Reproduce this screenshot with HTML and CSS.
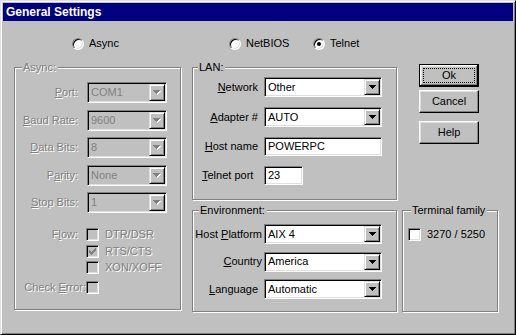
FILE: index.html
```html
<!DOCTYPE html>
<html>
<head>
<meta charset="utf-8">
<title>General Settings</title>
<link rel="stylesheet" href="styles.css">
</head>
<body>
<div class="win">
  <div class="titlebar">General Settings</div>
  <div class="client">
    <div class="modes">
      <div class="radio"><span class="rb"></span><span>Async</span></div>
      <div class="radio"><span class="rb"></span><span>NetBIOS</span></div>
      <div class="radio"><span class="rb on"></span><span>Telnet</span></div>
    </div>

    <div class="panes">
      <fieldset class="group async">
        <legend class="dim">Async:</legend>
        <div class="afields">
          <div class="field"><span class="lbl dim"><u>P</u>ort:</span><div class="combo off"><span class="val">COM1</span><span class="drop"><svg width="8" height="5" viewBox="0 0 8 5"><path class="ash" d="M1 1h7v1h-1v1h-1v1h-1v1h-1v-1h-1v-1h-1v-1h-1z"/><path class="afg" d="M0 0h7v1h-1v1h-1v1h-1v1h-1v-1h-1v-1h-1v-1h-1z"/></svg></span></div></div>
          <div class="field"><span class="lbl dim"><u>B</u>aud Rate:</span><div class="combo off"><span class="val">9600</span><span class="drop"><svg width="8" height="5" viewBox="0 0 8 5"><path class="ash" d="M1 1h7v1h-1v1h-1v1h-1v1h-1v-1h-1v-1h-1v-1h-1z"/><path class="afg" d="M0 0h7v1h-1v1h-1v1h-1v1h-1v-1h-1v-1h-1v-1h-1z"/></svg></span></div></div>
          <div class="field"><span class="lbl dim"><u>D</u>ata Bits:</span><div class="combo off"><span class="val">8</span><span class="drop"><svg width="8" height="5" viewBox="0 0 8 5"><path class="ash" d="M1 1h7v1h-1v1h-1v1h-1v1h-1v-1h-1v-1h-1v-1h-1z"/><path class="afg" d="M0 0h7v1h-1v1h-1v1h-1v1h-1v-1h-1v-1h-1v-1h-1z"/></svg></span></div></div>
          <div class="field"><span class="lbl dim">P<u>a</u>rity:</span><div class="combo off"><span class="val">None</span><span class="drop"><svg width="8" height="5" viewBox="0 0 8 5"><path class="ash" d="M1 1h7v1h-1v1h-1v1h-1v1h-1v-1h-1v-1h-1v-1h-1z"/><path class="afg" d="M0 0h7v1h-1v1h-1v1h-1v1h-1v-1h-1v-1h-1v-1h-1z"/></svg></span></div></div>
          <div class="field"><span class="lbl dim"><u>S</u>top Bits:</span><div class="combo off"><span class="val">1</span><span class="drop"><svg width="8" height="5" viewBox="0 0 8 5"><path class="ash" d="M1 1h7v1h-1v1h-1v1h-1v1h-1v-1h-1v-1h-1v-1h-1z"/><path class="afg" d="M0 0h7v1h-1v1h-1v1h-1v1h-1v-1h-1v-1h-1v-1h-1z"/></svg></span></div></div>
        </div>
        <div class="flow">
          <span class="lbl flowlbl dim">F<u>l</u>ow:</span>
          <div class="checks">
            <div class="chk"><span class="cb off"></span><span class="dim">DTR/DSR</span></div>
            <div class="chk"><span class="cb off"><svg width="7" height="7" viewBox="0 0 7 7"><path fill="#808080" d="M6 0h1v1h-1z M5 1h2v1h-2z M0 2h1v1h-1z M4 2h3v1h-3z M0 3h2v1h-2z M3 3h3v1h-3z M0 4h5v1h-5z M1 5h3v1h-3z M2 6h1v1h-1z"/></svg></span><span class="dim">RTS/CTS</span></div>
            <div class="chk"><span class="cb off"></span><span class="dim">XON/XOFF</span></div>
          </div>
        </div>
        <div class="checkerr"><span class="lbl errlbl dim">Check <u>E</u>rror:</span><span class="cb off"></span></div>
      </fieldset>

      <fieldset class="group lan">
        <legend>LAN:</legend>
        <div class="field"><span class="lbl"><u>N</u>etwork</span><div class="combo"><span class="val">Other</span><span class="drop"><svg width="7" height="4" viewBox="0 0 7 4"><path d="M0 0h7v1h-1v1h-1v1h-1v1h-1v-1h-1v-1h-1v-1h-1z"/></svg></span></div></div>
        <div class="field"><span class="lbl"><u>A</u>dapter #</span><div class="combo"><span class="val">AUTO</span><span class="drop"><svg width="7" height="4" viewBox="0 0 7 4"><path d="M0 0h7v1h-1v1h-1v1h-1v1h-1v-1h-1v-1h-1v-1h-1z"/></svg></span></div></div>
        <div class="field"><span class="lbl"><u>H</u>ost name</span><div class="edit">POWERPC</div></div>
        <div class="field"><span class="lbl leftlbl"><u>T</u>elnet port</span><div class="edit short">23</div></div>
      </fieldset>

      <div class="buttons">
        <div class="btn default"><span class="focus"><span>Ok</span></span></div>
        <div class="btn cancel">Cancel</div>
        <div class="btn help">Help</div>
      </div>

      <fieldset class="group env">
        <legend>Environment:</legend>
        <div class="field"><span class="lbl">Host <u>P</u>latform</span><div class="combo"><span class="val">AIX 4</span><span class="drop"><svg width="7" height="4" viewBox="0 0 7 4"><path d="M0 0h7v1h-1v1h-1v1h-1v1h-1v-1h-1v-1h-1v-1h-1z"/></svg></span></div></div>
        <div class="field"><span class="lbl"><u>C</u>ountry</span><div class="combo"><span class="val">America</span><span class="drop"><svg width="7" height="4" viewBox="0 0 7 4"><path d="M0 0h7v1h-1v1h-1v1h-1v1h-1v-1h-1v-1h-1v-1h-1z"/></svg></span></div></div>
        <div class="field"><span class="lbl langlbl"><u>L</u>anguage</span><div class="combo"><span class="val">Automatic</span><span class="drop"><svg width="7" height="4" viewBox="0 0 7 4"><path d="M0 0h7v1h-1v1h-1v1h-1v1h-1v-1h-1v-1h-1v-1h-1z"/></svg></span></div></div>
      </fieldset>

      <fieldset class="group term">
        <legend>Terminal family</legend>
        <div class="chk"><span class="cb"></span><span>3270 / 5250</span></div>
      </fieldset>
    </div>
  </div>
</div>
</body>
</html>
```

FILE: styles.css
```css
html, body {
  margin: 0;
  padding: 0;
  background: #c0c0c0;
}

body {
  font-family: "Liberation Sans", Arial, sans-serif;
  font-size: 11px;
  line-height: 13px;
  color: #000;
}

.win {
  box-sizing: border-box;
  width: 516px;
  height: 335px;
  padding: 2px;
  background: #c0c0c0;
  border: 1px solid;
  border-color: #dfdfdf #000 #000 #dfdfdf;
  box-shadow: inset 1px 1px 0 #fff, inset -1px -1px 0 #808080;
  display: flex;
  flex-direction: column;
}

.titlebar {
  height: 18px;
  line-height: 18px;
  background: #000080;
  color: #fff;
  font-weight: bold;
  font-size: 12px;
  padding-left: 3px;
}

.client {
  flex: 1;
}

/* mode radio row */
.modes {
  display: grid;
  grid-template-columns: 157px 84px auto;
  margin: 16px 0 0 69px;
  height: 13px;
}

.radio {
  display: flex;
  align-items: center;
  gap: 5px;
}

.rb {
  box-sizing: border-box;
  width: 12px;
  height: 12px;
  border-radius: 50%;
  background: #fff;
  border: 1px solid;
  border-color: #808080 #fff #fff #808080;
  box-shadow: inset 1px 1px 0 #000, inset -1px -1px 0 #dfdfdf;
  display: flex;
  align-items: center;
  justify-content: center;
}

.rb.on::after {
  content: "";
  width: 4px;
  height: 4px;
  border-radius: 50%;
  background: #000;
}

/* main panes */
.panes {
  display: grid;
  grid-template-columns: 167px 11px 205px 5px 96px;
  grid-template-rows: 139px 108px;
  row-gap: 4px;
  margin: 11px 0 0 11px;
}

.group {
  margin: 0;
  padding: 0;
  min-width: 0;
  border: 1px solid #808080;
  box-shadow: 1px 1px 0 #fff, inset 1px 1px 0 #fff;
}

.group legend {
  padding: 0 2px 0 1px;
  margin-left: 6px;
  line-height: 13px;
  background: #c0c0c0;
}

.async {
  grid-column: 1;
  grid-row: 1 / span 2;
  align-self: start;
  height: 249px;
  box-sizing: border-box;
  padding-top: 8px;
}

.async legend { margin-left: 7px; }

.lan {
  grid-column: 3;
  grid-row: 1;
  padding-top: 3px;
  display: flex;
  flex-direction: column;
  gap: 10px;
}

.lan legend { margin-left: 5px; }

.buttons {
  grid-column: 5;
  grid-row: 1;
  display: flex;
  flex-direction: column;
  align-items: flex-start;
  padding: 3px 0 0 17px;
}

.env {
  grid-column: 3;
  grid-row: 2;
  padding-top: 7px;
  display: flex;
  flex-direction: column;
  gap: 7.5px;
}

.term {
  grid-column: 5;
  grid-row: 2;
  padding-top: 11px;
}

.term legend { margin-left: 8px; }

.term .chk { margin-left: 5px; }

/* rows */
.field {
  display: flex;
  align-items: center;
}

.lbl {
  text-align: right;
  white-space: nowrap;
}

.dim {
  color: #808080;
  text-shadow: 1px 1px 0 #fff;
}

.afields {
  display: flex;
  flex-direction: column;
  gap: 6.5px;
}

.async .lbl {
  width: 63px;
  margin-right: 9px;
}

.async .combo {
  width: 80px;
  height: 21px;
}

.lan .lbl {
  width: 65px;
  margin-right: 6px;
}

.lan .leftlbl {
  text-align: left;
  box-sizing: border-box;
  padding-left: 9px;
}

.env .lbl {
  width: 69px;
  margin-right: 2px;
}

.env .langlbl {
  box-sizing: border-box;
  padding-right: 4px;
}

/* combo box */
.combo {
  box-sizing: border-box;
  width: 118px;
  height: 20px;
  display: flex;
  align-items: stretch;
  background: #fff;
  border: 1px solid;
  border-color: #808080 #fff #fff #808080;
  box-shadow: inset 1px 1px 0 #000, inset -1px -1px 0 #dfdfdf;
  padding: 1px 1px 1px 3px;
}

.combo.off {
  background: #c0c0c0;
  color: #808080;
}

.val {
  flex: 1;
  display: flex;
  align-items: center;
  white-space: nowrap;
}

.drop {
  box-sizing: border-box;
  width: 16px;
  background: #c0c0c0;
  border: 1px solid;
  border-color: #dfdfdf #000 #000 #dfdfdf;
  box-shadow: inset 1px 1px 0 #fff, inset -1px -1px 0 #808080;
  display: flex;
  align-items: center;
  justify-content: center;
}

.drop svg {
  display: block;
  fill: #000;
}

.drop .afg { fill: #808080; }
.drop .ash { fill: #fff; }

/* edit field */
.edit {
  box-sizing: border-box;
  width: 118px;
  height: 19px;
  background: #fff;
  border: 1px solid;
  border-color: #808080 #fff #fff #808080;
  box-shadow: inset 1px 1px 0 #000, inset -1px -1px 0 #dfdfdf;
  padding-left: 3px;
  display: flex;
  align-items: center;
}

.edit.short {
  width: 39px;
}

/* checkboxes */
.flow {
  display: flex;
  align-items: flex-start;
  margin-top: 15px;
}

.flow .flowlbl {
  width: 63px;
  margin-right: 8px;
}

.checks {
  display: flex;
  flex-direction: column;
  gap: 3.5px;
}

.chk {
  display: flex;
  align-items: center;
  gap: 6px;
  height: 13px;
}

.cb {
  box-sizing: border-box;
  width: 13px;
  height: 13px;
  background: #fff;
  border: 1px solid;
  border-color: #808080 #fff #fff #808080;
  box-shadow: inset 1px 1px 0 #000, inset -1px -1px 0 #dfdfdf;
  display: flex;
  align-items: center;
  justify-content: center;
}

.cb.off {
  background: #c0c0c0;
}

.cb svg { display: block; }

.checkerr {
  display: flex;
  align-items: center;
  margin-top: 7px;
}

.async .errlbl {
  width: 71px;
  margin-right: 0;
}

/* buttons */
.btn {
  box-sizing: border-box;
  width: 60px;
  height: 23px;
  background: #c0c0c0;
  border: 1px solid;
  border-color: #fff #000 #000 #fff;
  box-shadow: inset -1px -1px 0 #808080, inset 1px 1px 0 #dfdfdf;
  display: flex;
  align-items: center;
  justify-content: center;
}

.btn.default {
  border-color: #000;
  box-shadow: inset -1px -1px 0 #000, inset 1px 1px 0 #fff, inset -2px -2px 0 #808080, inset 2px 2px 0 #dfdfdf;
  align-items: stretch;
  justify-content: stretch;
}

.focus {
  flex: 1;
  margin: 3px;
  border: 1px dotted #000;
  display: flex;
  align-items: center;
  justify-content: center;
}

.btn.cancel { margin-top: 3px; }
.btn.help { margin-top: 8px; }
```
